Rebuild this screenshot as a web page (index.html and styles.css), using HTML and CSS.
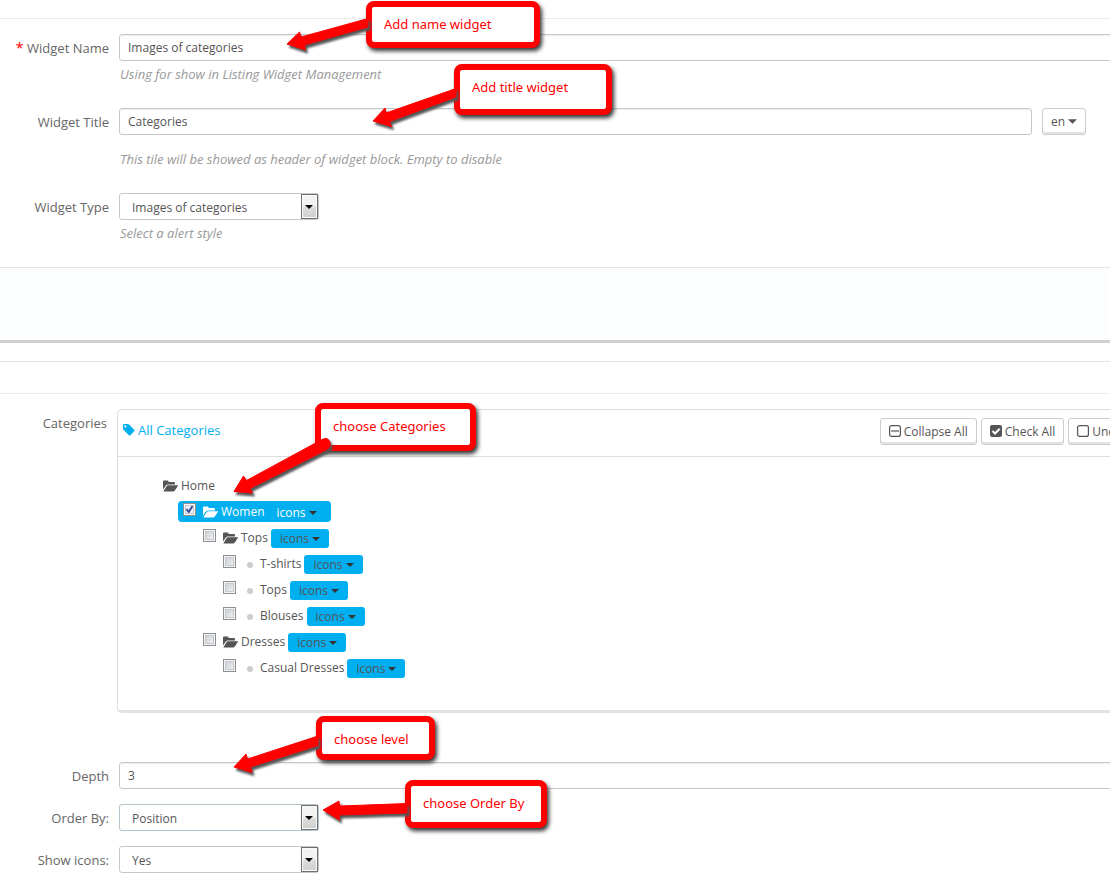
FILE: index.html
```html
<!DOCTYPE html>
<html lang="en">
<head>
<meta charset="utf-8">
<title>Widget settings</title>
<link rel="stylesheet" href="styles.css">
</head>
<body>
<svg class="defs" aria-hidden="true">
  <symbol id="folder" viewBox="0 0 15 12"><path d="M0 9.600V1.500Q0 .5 1 .5h3.500q1 0 1 1v.5H11q1 0 1 1v1.500H5Q3.500 4.500 2.700 5.700z"/><path d="M.3 11.500 3.500 6.300Q4 5.200 5.200 5.200h9.300q.9 0 .3.900l-2.900 4.400q-.6 1-1.900 1z"/></symbol>
  <symbol id="caret" viewBox="0 0 8 4"><path d="M0 0h8L4 4z"/></symbol>
</svg>
<main class="page">
  <form class="form">
    <section class="section general">
      <div class="row">
        <label class="label" for="name"><span class="required">*</span> Widget Name</label>
        <div class="field bleed"><input class="input" id="name" type="text" value="Images of categories"></div>
        <p class="hint">Using for show in Listing Widget Management</p>
      </div>
      <div class="row spaced">
        <label class="label" for="title">Widget Title</label>
        <div class="field with-lang"><input class="input" id="title" type="text" value="Categories"><button class="button lang" type="button">en <svg class="caret large"><use href="#caret"/></svg></button></div>
        <p class="hint">This tile will be showed as header of widget block. Empty to disable</p>
      </div>
      <div class="row">
        <label class="label" for="type">Widget Type</label>
        <div class="field"><span class="select"><select id="type"><option>Images of categories</option></select></span></div>
        <p class="hint">Select a alert style</p>
      </div>
    </section>
    <div class="footer"></div>
    <div class="heading"></div>
    <section class="section options">
      <div class="categories">
        <span class="label">Categories</span>
        <div class="panel">
          <div class="panel-head">
            <a class="all" href="#"><svg class="tag" viewBox="0 0 13 13"><path fill-rule="evenodd" d="M0 1.200Q0 0 1.200 0H5q1 0 1.800.8l5.400 5.400q.8.800 0 1.600l-4.200 4.300q-.8.800-1.600 0L.9 6.700Q0 5.800 0 4.800zM2.500 1.300a1.200 1.200 0 1 0 .01 0z"/></svg>All Categories</a>
            <div class="toolbar">
              <button class="button" type="button"><svg class="icon" viewBox="0 0 12 12"><rect class="line" x=".6" y=".6" width="10.800" height="10.800" rx="2"/><path class="line" d="M2 6h8"/></svg>Collapse All</button>
              <button class="button" type="button"><svg class="icon" viewBox="0 0 12 12"><rect width="12" height="12" rx="2"/><path class="tick" d="m2.500 6 2.500 2.500 4.700-4.700"/></svg>Check All</button>
              <button class="button" type="button"><svg class="icon" viewBox="0 0 12 12"><rect class="line" x=".6" y=".6" width="10.800" height="10.800" rx="2"/></svg>Uncheck All</button>
            </div>
          </div>
          <ul class="tree">
            <li><div class="node"><svg class="folder"><use href="#folder"/></svg><span>Home</span></div>
              <ul>
                <li><div class="node selected"><input class="check" id="c1" type="checkbox" checked><svg class="folder"><use href="#folder"/></svg><label for="c1">Women</label><button class="icons" type="button">icons <svg class="caret"><use href="#caret"/></svg></button></div>
                  <ul class="inner">
                    <li><div class="node"><input class="check" id="c2" type="checkbox"><svg class="folder"><use href="#folder"/></svg><label for="c2">Tops</label><button class="icons" type="button">icons <svg class="caret"><use href="#caret"/></svg></button></div>
                      <ul>
                        <li><div class="node leaf"><input class="check" id="c3" type="checkbox"><i class="dot"></i><label for="c3">T-shirts</label><button class="icons" type="button">icons <svg class="caret"><use href="#caret"/></svg></button></div></li>
                        <li><div class="node leaf"><input class="check" id="c4" type="checkbox"><i class="dot"></i><label for="c4">Tops</label><button class="icons" type="button">icons <svg class="caret"><use href="#caret"/></svg></button></div></li>
                        <li><div class="node leaf"><input class="check" id="c5" type="checkbox"><i class="dot"></i><label for="c5">Blouses</label><button class="icons" type="button">icons <svg class="caret"><use href="#caret"/></svg></button></div></li>
                      </ul>
                    </li>
                    <li><div class="node"><input class="check" id="c6" type="checkbox"><svg class="folder"><use href="#folder"/></svg><label for="c6">Dresses</label><button class="icons" type="button">icons <svg class="caret"><use href="#caret"/></svg></button></div>
                      <ul>
                        <li><div class="node leaf"><input class="check" id="c7" type="checkbox"><i class="dot"></i><label for="c7">Casual Dresses</label><button class="icons" type="button">icons <svg class="caret"><use href="#caret"/></svg></button></div></li>
                      </ul>
                    </li>
                  </ul>
                </li>
              </ul>
            </li>
          </ul>
        </div>
      </div>
      <div class="row">
        <label class="label" for="depth">Depth</label>
        <div class="field bleed"><input class="input" id="depth" type="text" value="3"></div>
      </div>
      <div class="row">
        <label class="label" for="order">Order By:</label>
        <div class="field"><span class="select active"><select id="order"><option>Position</option></select></span></div>
      </div>
      <div class="row">
        <label class="label" for="show">Show icons:</label>
        <div class="field"><span class="select"><select id="show"><option>Yes</option></select></span></div>
      </div>
    </section>
  </form>
  <div class="callout c-name">Add name widget</div>
  <div class="callout c-title">Add title widget</div>
  <div class="callout c-cat">choose Categories</div>
  <div class="callout c-level">choose level</div>
  <div class="callout c-order">choose Order By</div>
  <svg class="arrows" viewBox="0 0 560 840" aria-hidden="true">
    <path d="M368 18.500 301 37 299.500 32 287 44 305.500 50 304.500 45 368 27z"/>
    <path d="M456 88.500 386 113 385 108 373 121 391.500 126.500 389.500 121.500 456 97z"/>
    <path d="M322 439.500 Q328 436.500 330 442 Q331.500 446.500 327 449.500 L250 488.500 252.500 493 234 491.500 243.500 476 246.500 480.500z"/>
    <path d="M318 736 247.500 759 246 754 234 767 252 772.500 250.500 767 318 745.500z"/>
    <path d="M407 803.500 339.500 806 339 801 323 810 339.500 820 339 815 407 813z"/>
  </svg>
</main>
</body>
</html>
```
FILE: styles.css
```css
* { box-sizing: border-box; }
body { margin: 0; background: #fff; color: #555; font: 13px/18px "Open Sans", sans-serif; }
.page { position: relative; overflow: hidden; padding-top: 18px; }
.defs { position: absolute; width: 0; height: 0; }
.section { border-top: 1px solid #eaeaea; padding-top: 15px; }
.row { display: grid; grid-template-columns: 109px minmax(0, 1fr); column-gap: 10px; align-items: center; margin-bottom: 15px; }
.general .row { margin-bottom: 24px; }
.label { text-align: right; color: #666; }
.required { color: #f00; font-size: 15px; }
.hint { grid-column: 2; margin: 4px 0 1px 1px; color: #999; font-size: 13px; font-style: italic; }
.spaced .hint { margin-top: 15px; }
.field { display: flex; }
.bleed { margin-right: -24px; }
.with-lang { gap: 10px; margin-right: 24px; }
.input { flex: 1; min-width: 0; height: 27px; padding: 0 8px; border: 1px solid #c7c7c7; border-radius: 3px; background: #fff; box-shadow: inset 0 1px 1px #eee; color: #555; font: 12px "Open Sans", sans-serif; }
.button { display: flex; align-items: center; height: 27px; padding: 0 8px; border: 1px solid #ccc; border-radius: 3px; background: #fff; box-shadow: inset 0 -2px 0 #e3e3e3; color: #555; font: 12px "Open Sans", sans-serif; white-space: nowrap; }
.lang { gap: 3px; }
.caret { width: 8px; height: 4px; fill: #333; }
.large { width: 9px; height: 5px; fill: #555; }
.select { position: relative; display: block; width: 200px; }
.select select { appearance: none; display: block; width: 100%; height: 27px; padding: 2px 24px 0 12px; border: 1px solid #c7c7c7; border-radius: 3px; background: #fff; color: #555; font: 12px "Open Sans", sans-serif; }
.active select { border-color: #b5c3cc; }
.select::before { content: ""; position: absolute; top: 1px; right: 1px; bottom: 1px; width: 17px; border: 1px solid #707070; background: linear-gradient(#f3f3f3 0 45%, #dcdcdc 55%, #cfcfcf); box-shadow: inset 0 0 0 1px #fafafa; pointer-events: none; }
.select::after { content: ""; position: absolute; top: 12px; right: 6px; border: 4px solid transparent; border-top-color: #000; border-bottom: 0; pointer-events: none; }
.select::before, .select::after { box-sizing: border-box; }
.footer { height: 76px; border-top: 1px solid #e6e6e6; border-bottom: 3px solid #d0d0d0; background: #fcfdfe; }
.heading { height: 32px; margin-top: 18px; border-top: 1px solid #e2e2e2; }
.options { border-color: #eee; padding-bottom: 11px; }
.categories { display: grid; grid-template-columns: 107px minmax(0, 1fr); column-gap: 10px; margin: 0 -66px 49px 0; }
.categories > .label { padding-top: 5px; }
.panel { border: 1px solid #ddd; border-bottom: 3px solid #e2e2e2; border-radius: 5px; }
.panel-head { display: flex; align-items: center; justify-content: space-between; height: 47px; padding: 0 9px 0 5px; border-bottom: 1px solid #ddd; }
.all { display: flex; align-items: center; gap: 3px; padding-bottom: 6px; color: #00aff0; text-decoration: none; }
.tag { width: 12px; height: 12px; fill: #00aff0; }
.toolbar { display: flex; gap: 4px; padding-bottom: 4px; }
.icon { width: 12px; height: 12px; margin-right: 3px; fill: #555; }
.line { fill: none; stroke: #555; stroke-width: 1.2; }
.tick { fill: none; stroke: #fff; stroke-width: 2; }
.tree, .tree ul { margin: 0; padding: 0; list-style: none; }
.tree { padding: 18px 45px 27px; }
.tree ul { padding-left: 20px; }
.tree > li > ul { padding-left: 15px; }
.tree .inner { padding-left: 25px; }
.node { display: flex; align-items: center; width: max-content; height: 21px; margin-bottom: 5px; font-size: 12px; }
.folder { width: 15px; height: 12px; margin-right: 3px; fill: #555; }
.check { appearance: none; width: 13px; height: 13px; margin: 0 7px 4px 0; border: 1px solid #8e8f8f; background: linear-gradient(135deg, #c4c9d0, #f6f6f6); box-shadow: inset 0 0 0 1px #f4f4f4, inset 0 0 0 2px #c5cad0; }
.check:checked { background: #eef url("data:image/svg+xml,%3Csvg xmlns='http://www.w3.org/2000/svg' viewBox='0 0 11 11'%3E%3Cpath d='M2.500 5 4.700 8 8.500 2' fill='none' stroke='%23334f94' stroke-width='2'/%3E%3C/svg%3E"); }
.dot { width: 6px; height: 6px; margin: 2px 7px 0 4px; border-radius: 50%; background: #ccc; }
.icons { display: flex; align-items: center; gap: 3px; height: 19px; margin: 2px 0 0 3px; padding: 0 9px; border: 0; border-radius: 3px; background: #00aff0; color: #555; font: 12px "Open Sans", sans-serif; }
.selected { padding: 0 5px; border-radius: 4px; background: #00aff0; color: #fff; }
.selected .icons { color: #fff; }
.selected .folder { fill: #fff; }
.callout { position: absolute; padding: 8px 12px; border: 6px solid #f00; border-radius: 8px; background: #fff; box-shadow: 2px 3px 4px #333; color: #f00; font-family: "Noto Sans", sans-serif; font-size: 13px; }
.c-name { left: 366px; top: 1px; width: 174px; height: 47px; }
.c-title { left: 454px; top: 64px; width: 158px; height: 51px; }
.c-cat { left: 315px; top: 403px; width: 161px; height: 48px; }
.c-level { left: 316px; top: 716px; width: 119px; height: 44px; }
.c-order { left: 405px; top: 780px; width: 142px; height: 48px; }
.arrows { position: absolute; left: 0; top: 0; width: 560px; height: 840px; fill: #f00; stroke: #f00; stroke-linejoin: round; filter: drop-shadow(2px 3px 1px #555); pointer-events: none; }
```
